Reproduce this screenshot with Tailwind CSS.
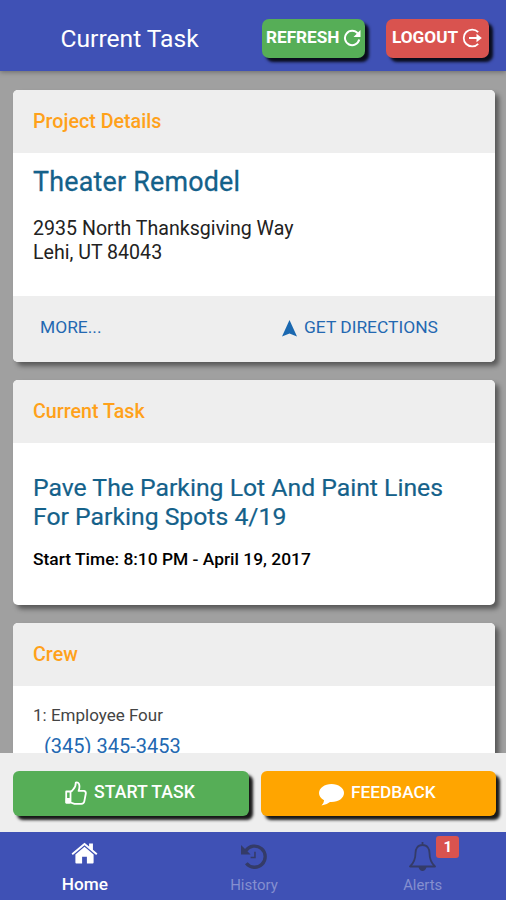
<!DOCTYPE html>
<html lang="en">
<head>
<meta charset="utf-8">
<title>Current Task</title>
<script src="https://cdn.jsdelivr.net/npm/@tailwindcss/browser@4"></script>
</head>
<body class="w-[506px] h-[900px] overflow-hidden flex flex-col bg-[#a0a0a0] font-['Roboto',sans-serif] text-black">
<header class="relative z-10 h-[71px] shrink-0 bg-[#3f51b5] shadow-[0_1px_5px_rgba(0,0,0,0.35)] flex items-start text-white">
  <h1 class="w-[262px] pl-[60.5px] pt-[22px] text-[24.6px] leading-[33px] whitespace-nowrap">Current Task</h1>
  <button class="mt-[19px] w-[103px] h-[39px] rounded-[7px] bg-[#56ae57] shadow-[4px_4px_3px_rgba(0,0,0,0.85)] flex items-center pl-[4px] pb-[2px] gap-[4px] font-bold text-[17.2px] whitespace-nowrap"><span class="w-[73px]">REFRESH</span>
    <svg class="size-[18px]" viewBox="0 0 18 18" fill="none" stroke="white" stroke-width="2"><path d="M14.8 4.5A7.2 7.2 0 1 0 16.2 10.5"/><path d="M17.5 1v7h-7z" fill="white" stroke="none"/></svg>
  </button>
  <button class="ml-[21px] mt-[19px] w-[103px] h-[39px] rounded-[7px] bg-[#d9534f] shadow-[4px_4px_3px_rgba(0,0,0,0.85)] flex items-center pl-[6px] pb-[2px] gap-[4px] font-bold text-[17.2px] whitespace-nowrap"><span class="w-[66px]">LOGOUT</span>
    <svg class="w-[20px] h-[20px]" viewBox="0 0 20 20" fill="none" stroke="white" stroke-width="1.8"><path d="M16.2 4.2A8.4 8.4 0 1 0 16.2 15.8M7 10h10"/><path d="M14.5 5.8 19.8 10l-5.300 4.200z" fill="white" stroke="none"/></svg>
  </button>
</header>
<main class="flex-1 min-h-0 overflow-hidden pt-[19px] pl-[13px] pr-[11px] flex flex-col gap-[18px]">
  <section class="h-[272px] shrink-0 rounded-[5px] bg-white shadow-[4px_4px_5px_rgba(0,0,0,0.45)] flex flex-col overflow-hidden">
    <h2 class="h-[63px] bg-[#eee] px-[20px] pt-[19px] text-[19.7px] leading-[26px] font-medium text-[#ffa11a]"><span>Project Details</span></h2>
    <div class="flex-1 px-[20px] pt-[13px]">
      <h3 class="text-[26.8px] leading-[32px] tracking-[0.25px] text-[#14618a] [-webkit-text-stroke:0.3px_#14618a]"><span>Theater Remodel</span></h3>
      <p class="mt-[19px] text-[19.6px] leading-[23.5px] text-[#222]"><span>2935 North Thanksgiving Way</span><br><span>Lehi, UT 84043</span></p>
    </div>
    <div class="h-[66px] bg-[#eee] flex items-center pb-[3px] text-[17.4px] text-[#2368b1]">
      <a class="w-[269px] pl-[27px]"><span>MORE...</span></a>
      <svg class="w-[15px] h-[17px] mt-[2px] mr-[7px]" viewBox="0 0 15 17" fill="#1a68b0"><path d="M7.5 0 15 16.5 7.5 13.5 0 16.5z"/></svg>
      <a><span>GET DIRECTIONS</span></a>
    </div>
  </section>
  <section class="h-[225px] shrink-0 rounded-[5px] bg-white shadow-[4px_4px_5px_rgba(0,0,0,0.45)] flex flex-col overflow-hidden">
    <h2 class="h-[63px] bg-[#eee] px-[20px] pt-[19px] text-[19.7px] leading-[26px] font-medium text-[#ffa11a]"><span>Current Task</span></h2>
    <div class="px-[20px] pt-[30px]">
      <h3 class="text-[24.75px] leading-[29px] text-[#14618a] whitespace-nowrap [-webkit-text-stroke:0.2px_#14618a]"><span>Pave The Parking Lot And Paint Lines</span><br><span>For Parking Spots 4/19</span></h3>
      <p class="mt-[17px] text-[17.4px] leading-[22px] font-medium"><span>Start Time: 8:10 PM - April 19, 2017</span></p>
    </div>
  </section>
  <section class="h-[200px] shrink-0 rounded-[5px] bg-white shadow-[4px_4px_5px_rgba(0,0,0,0.45)] flex flex-col overflow-hidden">
    <h2 class="h-[63px] bg-[#eee] px-[20px] pt-[19px] text-[19.7px] leading-[26px] font-medium text-[#ffa11a]"><span>Crew</span></h2>
    <div class="px-[20px] pt-[17px]">
      <p class="text-[17px] leading-[24px] text-[#444]"><span>1: Employee Four</span></p>
      <a class="block mt-[6px] pl-[11px] text-[20px] leading-[26px] text-[#2368b1]"><span>(345) 345-3453</span></a>
    </div>
  </section>
</main>
<div class="relative z-10 h-[79px] shrink-0 bg-[#eee] pt-[18px] pl-[13px] flex items-start gap-[12px] text-white font-medium text-[17.7px]">
  <button class="w-[236px] h-[45px] rounded-[6px] bg-[#56ae57] shadow-[4px_4px_3px_rgba(0,0,0,0.9)] flex items-center pl-[52px] pb-[2px] gap-[7px]">
    <svg class="w-[22px] h-[24px]" viewBox="0 0 22 24" fill="none" stroke="white" stroke-width="1.8" stroke-linejoin="round"><path d="M5.500 10.500H1.200v11h4.300M5.500 10.500v11l4 1.300h6.800q2.600-.2 3-2.500l1.500-7.800q.2-2.300-2-2.600h-5.200q1.500-4 .4-7-1-2-3.200-1.400Q10.700 6 8.500 8q-1.400 2.300-3 2.500"/><path d="M1.500 18v3.500h3V18z" fill="white"/></svg>
    <span>START TASK</span>
  </button>
  <button class="w-[235px] h-[45px] rounded-[6px] bg-[#ffa500] shadow-[4px_4px_3px_rgba(0,0,0,0.9)] flex items-center pl-[58px] pb-[2px] gap-[7px]">
    <svg class="w-[25px] h-[22px] mt-[4px]" viewBox="0 0 25 22" fill="white"><path d="M12.5 0C19.500 0 25 4 25 9s-5.500 9-12.500 9h-1.500Q7.500 21 2.500 21.500 5 19 5.100 16.300 0 13.500 0 9c0-5 5.500-9 12.500-9z"/></svg>
    <span class="text-[17.3px]">FEEDBACK</span>
  </button>
</div>
<nav class="relative z-10 h-[68px] shrink-0 bg-[#3f51b5] grid grid-cols-3 text-center">
  <a class="flex flex-col items-center pt-[10px] pl-[1px] text-white">
    <svg class="w-[27px] h-[23px]" viewBox="0 0 28 24" fill="white"><path d="M14 5 4.500 13v8.500q0 1 1 1H11.500v-7h5v7h6q1 0 1-1V13z"/><path d="M14 .8 18.800 4.800V1.500h4v6.700L27.500 12l-1.300 1.500L14 3.300 1.800 13.500.5 12z"/></svg>
    <span class="mt-[8px] text-[17.2px] leading-[22px] font-medium">Home</span>
  </a>
  <a class="flex flex-col items-center pt-[12px] pl-[2px] text-[#858fcf]">
    <svg class="w-[26px] h-[25px]" viewBox="0 0 27 26" fill="none" stroke="#343b68" stroke-width="3.500"><path d="M5 7A11 11 0 1 1 5.500 20"/><path d="M0 1v10h10z" fill="#343b68" stroke="none"/><path d="M14.500 8v6H10" stroke-width="1.600"/></svg>
    <span class="mt-[6px] text-[15px] leading-[20px]">History</span>
  </a>
  <a class="relative flex flex-col items-center pt-[10px] pl-[2px] text-[#858fcf]">
    <svg class="w-[27px] h-[30px]" viewBox="0 0 27 30" fill="none" stroke="#343b68" stroke-width="1.800" stroke-linejoin="round"><path d="M13.500 3C8.500 3 6.500 7 6.500 11q0 8.500-5.500 13.500h25Q20.500 19.500 20.500 11c0-4-2-8-7-8zM13.500 0v3"/><path d="M9.500 25h8q-1 4-4 4t-4-4z" fill="#343b68" stroke="none"/></svg>
    <span class="mt-[3px] text-[14.8px] leading-[20px]">Alerts</span>
    <span class="absolute left-[99px] top-[4px] w-[23px] h-[22px] rounded-[3px] bg-[#d9534f] text-white font-bold text-[15px] leading-[22px]">1</span>
  </a>
</nav>
</body>
</html>
